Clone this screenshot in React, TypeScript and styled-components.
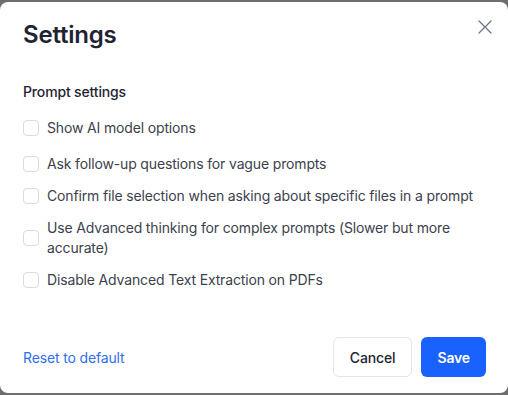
import styled, { createGlobalStyle } from "styled-components";

const options = [
  "Show AI model options",
  "Ask follow-up questions for vague prompts",
  "Confirm file selection when asking about specific files in a prompt",
  "Use Advanced thinking for complex prompts (Slower but more accurate)",
  "Disable Advanced Text Extraction on PDFs",
];

const GlobalStyle = createGlobalStyle`
  html, body {
    margin: 0;
    padding: 0;
    background: #6e6e6e;
    font-family: Inter, "Noto Sans", sans-serif;
  }
`;

export default function App() {
  return (
    <>
      <GlobalStyle />
      <Dialog>
        <Header>
          <Title>Settings</Title>
          <CloseButton aria-label="Close">
            <svg width="14" height="14" viewBox="0 0 14 14">
              <path d="M1 1L13 13M13 1L1 13" stroke="#6b7280" strokeWidth="1.2" strokeLinecap="round" />
            </svg>
          </CloseButton>
        </Header>
        <Section>
          <SectionTitle>Prompt settings</SectionTitle>
          <OptionList>
            {options.map((text, i) => (
              <Option key={text} $first={i === 0}>
                <Box type="checkbox" />
                <span>{text}</span>
              </Option>
            ))}
          </OptionList>
        </Section>
        <Footer>
          <ResetLink>Reset to default</ResetLink>
          <Actions>
            <CancelButton>Cancel</CancelButton>
            <SaveButton>Save</SaveButton>
          </Actions>
        </Footer>
      </Dialog>
    </>
  );
}

const Dialog = styled.div`
  margin-top: 2px;
  height: 391px;
  box-sizing: border-box;
  background: #fff;
  border-radius: 8px;
  padding: 0 22px 0 23px;
  display: flex;
  flex-direction: column;
`;

const Header = styled.div`
  display: flex;
  justify-content: space-between;
  align-items: flex-start;
  padding-top: 18px;
`;

const Title = styled.h2`
  margin: 0;
  font-size: 24px;
  line-height: 30px;
  font-weight: 600;
  color: #1f2433;
  letter-spacing: -0.2px;
`;

const CloseButton = styled.button`
  border: 0;
  background: none;
  padding: 0;
  margin: 0 -6px 0 0;
  width: 14px;
  height: 14px;
  cursor: pointer;
  display: flex;
`;

const Section = styled.div`
  margin-top: 32px;
`;

const SectionTitle = styled.div`
  font-size: 14px;
  line-height: 20px;
  font-weight: 500;
  color: #1f2433;
  letter-spacing: -0.15px;
`;

const OptionList = styled.div`
  margin-top: 16px;
  display: flex;
  flex-direction: column;
  gap: 12px;
`;

const Option = styled.label<{ $first?: boolean }>`
  display: flex;
  align-items: center;
  gap: 8px;
  font-size: 14px;
  line-height: 20px;
  color: #3c414d;
  letter-spacing: -0.15px;
  margin-bottom: ${(p) => (p.$first ? "4px" : "0")};
`;

const Box = styled.input`
  appearance: none;
  flex: none;
  margin: 0;
  width: 16px;
  height: 16px;
  border: 1px solid #d8dbe0;
  border-radius: 4px;
  background: #fff;
`;

const Footer = styled.div`
  margin-top: auto;
  margin-bottom: 16px;
  display: flex;
  justify-content: space-between;
  align-items: center;
`;

const ResetLink = styled.a`
  font-size: 14px;
  color: #2f6ff0;
  letter-spacing: -0.15px;
  cursor: pointer;
`;

const Actions = styled.div`
  display: flex;
  gap: 9px;
`;

const CancelButton = styled.button`
  height: 40px;
  padding: 0 16px;
  border: 1px solid #e3e5e9;
  border-radius: 6px;
  background: #fff;
  font-family: inherit;
  font-size: 14px;
  font-weight: 500;
  letter-spacing: -0.15px;
  color: #1f2433;
`;

const SaveButton = styled.button`
  height: 40px;
  padding: 0 16px;
  border: 0;
  border-radius: 6px;
  background: #1a62ff;
  font-family: inherit;
  font-size: 14px;
  font-weight: 600;
  letter-spacing: -0.15px;
  color: #fff;
`;
